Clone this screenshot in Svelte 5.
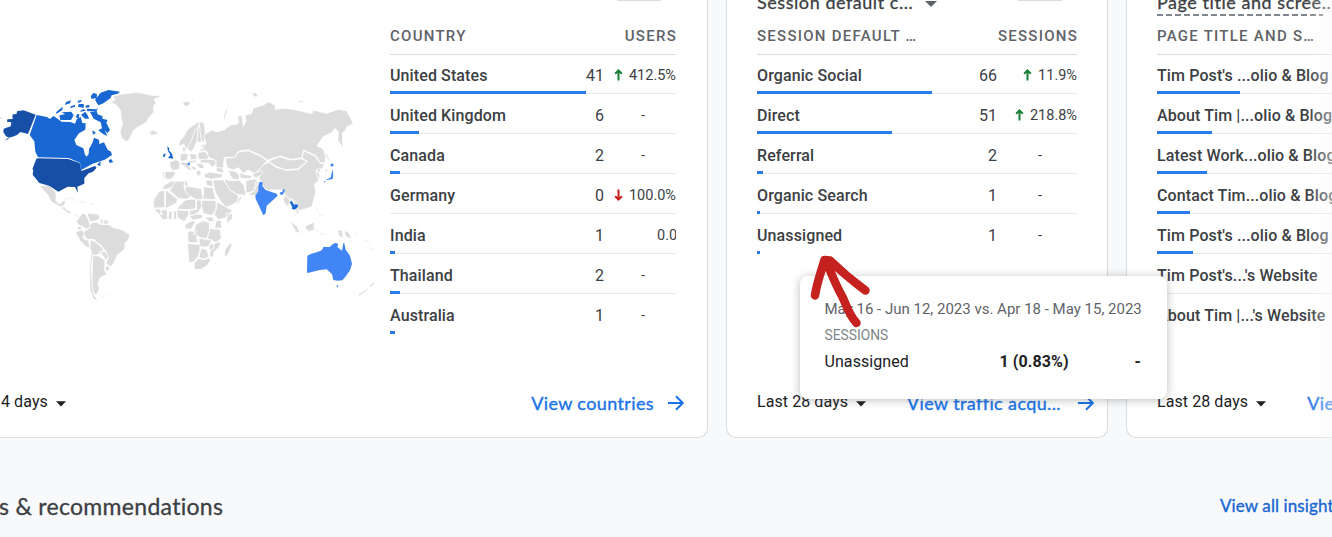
<script>
  const countries = [
    { name: 'United States', value: '41', trend: 'up', change: '412.5%', bar: 195.5 },
    { name: 'United Kingdom', value: '6', change: '-', bar: 29 },
    { name: 'Canada', value: '2', change: '-', bar: 10 },
    { name: 'Germany', value: '0', trend: 'down', change: '100.0%', bar: 0 },
    { name: 'India', value: '1', change: '0.0', cut: true, bar: 5 },
    { name: 'Thailand', value: '2', change: '-', bar: 10 },
    { name: 'Australia', value: '1', change: '-', bar: 5 }
  ];
  const channels = [
    { name: 'Organic Social', value: '66', trend: 'up', change: '11.9%', bar: 175 },
    { name: 'Direct', value: '51', trend: 'up', change: '218.8%', bar: 135 },
    { name: 'Referral', value: '2', change: '-', bar: 5.5 },
    { name: 'Organic Search', value: '1', change: '-', bar: 3 },
    { name: 'Unassigned', value: '1', change: '-', bar: 3 }
  ];
  const pages = [
    { name: "Tim Post's ...olio & Blog", bar: 83 },
    { name: 'About Tim |...olio & Blog', bar: 55 },
    { name: 'Latest Work...olio & Blog', bar: 50 },
    { name: 'Contact Tim...olio & Blog', bar: 33 },
    { name: "Tim Post's ...olio & Blog", bar: 36 },
    { name: "Tim Post's...'s Website", bar: 0 },
    { name: "About Tim |...'s Website", bar: 0 }
  ];
</script>

{#snippet rows(items, kind)}
  {#each items as row, i}
    <div class="row" class:last={i === items.length - 1}>
      <span class="name">{row.name}</span>
      {#if row.value}
        <span class="value">{row.value}</span>
        <span class="change {kind}" class:none={row.change === '-'} class:cut={row.cut}>
          {#if row.trend}
            <svg class="trend {row.trend}" width="9" height="12" viewBox="0 0 9 12"><path d="M4.5 11.6V2.5M1.2 4.7 4.5 1.4 7.8 4.7" /></svg>
          {/if}{row.change}</span>
      {/if}
      <i class="bar" style="width:{row.bar}px"></i>
    </div>
  {/each}
{/snippet}

{#snippet caret()}
  <svg class="caret" width="10" height="6" viewBox="0 0 10 6"><path d="M0 .2h10L5 5.6z" /></svg>
{/snippet}

{#snippet arrow()}
  <svg class="go" width="16" height="16" viewBox="0 0 16 16"><path d="M0 8h14.5M8 1.2 14.8 8 8 14.8" /></svg>
{/snippet}

<main>
  <div class="cards">
    <section class="card geo">
      <div class="title"><span class="pill"></span></div>
      <div class="body">
        <svg class="map" width="390" height="230" viewBox="0 0 1170 690">
          <g class="land">
            <path d="M330 66 345 60 340 48 365 42 410 37 425 39 450 45 485 48 462 58 468 68 460 80 462 95 445 115 440 127 415 140 400 152 388 178 380 186 366 176 360 155 368 130 363 115 362 92 350 76z" />
            <path d="M448 154 460 151 474 156 470 163 455 167z M0 109 10 112 4 118 0 116z" />
            <path d="M118 317 150 317 168 338 168 363 180 372 190 362 198 363 193 374 184 382 154 366 143 344 130 330z M182 382 193 380 200 390 210 392 214 402 202 398z" />
            <path class="fine" d="M194 358 215 354 226 362M235 366 258 367M268 371 279 373M222 405 237 410" />
            <path d="M238 411 247 400 257 402 270 430 271 442 260 447 240 437 228 427z" />
            <path d="M260 399 296 403 300 416 286 423 270 426z M300 418 308 418 311 431 302 431z M312 418 327 423 322 433 312 432z" />
            <path d="M231 440 247 438 243 449 232 449z" />
            <path d="M226 456 247 449 253 460 249 475 266 482 270 505 258 500 240 482z" />
            <path d="M250 456 270 443 270 430 288 426 300 433 327 434 338 442 368 450 390 464 385 480 375 490 374 508 352 525 340 552 331 560 317 550 325 535 318 515 299 492 292 488 282 478 266 479 256 473z" />
            <path d="M270 480 285 484 310 506 307 520 290 525 277 526 270 505z M296 516 312 512 326 530 318 542 309 528z M316 559 326 558 330 568 317 575z" />
            <path d="M278 527 295 527 315 541 314 571 320 583 300 594 294 612 298 625 290 645 280 640 275 610 277 570z" />
            <path d="M272 520 277 527 274 570 277 618 280 641 296 665 280 656 270 630 269 575z" />
            <path class="fine" d="M304 651 310 650M319 649 328 647" />

            <path d="M535 195 540 182 553 166 562 150 580 135 590 129 598 125 606 126 596 138 587 155 581 180 566 208 556 205 552 193 541 197z" />
            <path d="M586 148 597 142 599 164 590 185 582 206 572 215 562 205 575 180z" />
            <path d="M594 136 606 142 612 178 600 188 590 184 593 164z" />
            <path d="M598 125 612 128 616 160 618 180 606 188 601 160z M604 194 616 191 614 202 603 202z M600 205 617 205 616 213 601 213z" />
            <path d="M548 67 568 63 570 72 560 80 550 75z M572 60 585 61 580 65z M755 40 767 38 776 50 763 51z M892 63 912 62 908 67 895 67z M669 119 676 90 700 79 682 91 674 117z" />
            <path d="M541 222 556 219 566 225 560 240 546 245 540 237z M568 220 590 223 591 238 573 240z M594 218 615 214 628 230 618 241 594 237z" />
            <path d="M600 240 618 237 650 240 648 254 637 262 626 250 600 248z M548 202 558 202 557 214 547 215z" />
            <path d="M508 247 528 239 540 246 538 268 520 272 512 264z" />
            <path d="M494 275 518 274 528 279 514 298 495 297z M488 276 493 276 492 296 487 294z" />
            <path d="M542 246 560 247 575 268 568 272 555 259 544 255z M559 278 568 278 564 284z" />
            <path d="M568 242 588 240 588 248 566 249z M588 250 608 250 614 266 598 265z M575 257 588 262 588 273 575 265z M586 275 600 270 604 280 595 290z" />
            <path d="M612 282 630 276 668 282 665 293 632 297 614 293z" />
            <path d="M610 166 635 150 650 155 672 150 690 136 715 131 713 108 725 105 730 140 738 123 735 105 754 101 760 84 790 75 805 65 825 75 826 88 850 85 880 88 911 95 936 101 940 90 980 100 1016 88 1039 92 1054 118 1060 132 1040 140 1035 155 1027 157 1029 205 1013 180 1015 155 1005 145 995 158 970 170 951 197 969 206 977 228 975 250 960 247 948 227 911 210 905 234 870 238 842 228 802 240 780 225 745 210 715 214 705 232 673 232 670 263 648 270 648 242 626 232 620 214 606 206 618 190z" />
            <path d="M675 235 705 232 715 216 745 212 780 228 801 242 780 268 763 280 745 270 730 280 715 263 700 270 682 263z" />
            <path d="M805 244 838 230 870 240 905 236 920 245 893 267 855 269 828 259z" />
            <path d="M774 272 790 255 805 246 827 261 858 271 895 269 922 244 906 235 911 212 946 229 960 249 973 252 966 267 947 273 960 282 954 304 943 312 948 335 936 380 900 392 874 382 860 350 845 330 800 330 782 312z" />
            <path d="M650 262 668 265 671 280 648 274z M685 270 705 273 720 286 715 300 700 298 690 286z M720 278 735 284 760 286 750 296 720 295z M752 285 783 271 790 279 768 294z" />
            <path d="M672 298 695 302 720 302 733 318 738 347 710 342 687 328z M737 302 765 296 775 305 762 333 738 340z M766 307 785 303 783 320 769 347 744 345 763 330z" />
            <path d="M638 300 671 300 690 330 714 346 715 362 700 375 679 383 663 365 645 335z M679 383 718 368 725 352 720 345 714 365z M618 300 637 301 639 321 618 315z" />
            <path d="M977 265 986 274 974 277z M948 277 956 274 960 297 952 293z M947 270 962 265 960 280z" />
            <path d="M973 214 983 226 992 248 982 237z" />

            <path d="M490 318 513 304 530 303 528 316 500 328 488 328z M463 355 478 334 494 331 494 383 462 384 460 372z M497 329 533 358 529 370 496 386z" />
            <path d="M527 304 553 303 552 318 558 335 580 347 559 358 535 355 509 332z" />
            <path d="M553 302 562 304 565 318 556 322z M553 323 565 319 605 326 608 358 589 360 559 340z M611 320 639 323 647 359 609 357z" />
            <path d="M560 359 587 357 588 386 569 389 530 388 548 366z M530 390 565 391 567 402 553 425 532 413z M590 359 603 361 605 380 595 398 569 410 569 391 590 388z" />
            <path d="M606 361 647 361 651 387 635 407 610 400 604 380z M651 365 680 382 697 391 684 411 655 419 643 405z M679 399 698 402 696 417 681 431z" />
            <path d="M462 387 482 387 487 405 475 401z M485 390 502 388 503 416 490 420 479 407z M506 393 517 395 515 419 505 419z M520 393 530 393 530 418 521 418z" />
            <path d="M553 436 568 426 580 422 587 426 573 448 558 447z M568 408 593 402 607 404 608 415 579 421z M648 422 663 420 666 444 644 445z M614 411 638 411 643 424 628 425z" />
            <path d="M588 432 611 422 628 428 628 456 620 476 599 472 579 460z" />
            <path d="M564 453 578 453 590 466 593 488 565 488 563 470z M630 446 660 448 664 475 648 488 622 475z M596 475 618 478 636 480 625 500 600 502z M644 490 661 484 660 498 642 516 639 532 629 530 630 510z" />
            <path d="M562 491 600 493 600 510 594 531 581 546 567 547z M603 505 620 508 627 531 611 537 596 532z M627 495 640 488 641 506 628 511z" />
            <path d="M582 550 596 535 613 539 628 533 632 541 621 557 603 568 584 569z M674 510 690 490 696 493 688 516 678 532 674 525z M584 448 591 455 581 465z" />
            <path d="M852 346 866 353 870 365 864 380 852 368 850 356z M878 358 890 368 897 400 891 404 886 384z M870 354 878 361 882 366 874 366z" />
            <path d="M884 404 890 405 886 410z" />
            <path d="M868 423 891 438 901 461 888 455z M904 465 925 468M917 437 929 432 942 426 943 450 925 454 916 446z M809 407 812 415 806 414z" />
            <path d="M1012 452 1026 449 1030 474 1018 469z M1032 451 1046 457 1055 476 1037 470z M951 368 955 378 952 381z" />
            <path class="fine" d="M950 386 957 391M957 404 968 408M950 448 954 455M960 461 976 465M1063 454 1073 463M1093 479 1108 487M1109 506 1122 510" />
            <path d="M1107 619 1122 605 1125 610 1112 622z M1074 643 1103 624 1102 630 1078 648z" />
          </g>
          <g class="us">
            <path d="M22 118 38 117 37 104 50 101 51 94 70 91 77 93 107 104 84 162 61 156 51 165 28 173 18 169 10 156 11 146 32 139 34 127 21 125z" />
            <path d="M13 182 24 174 27 176M38 170 45 167 42 163" />
            <path d="M116 235 205 237 239 249 244 273 285 258 290 263 279 275 266 280 253 294 253 311 232 320 234 338 225 321 203 320 175 335 149 318 118 309 98 284 100 269 97 268 109 236z" />
          </g>
          <g class="ca">
            <path d="M110 105 141 111 150 117 160 108 173 116 185 125 211 126 225 131 230 118 242 110 247 129 257 130 256 149 237 160 223 180 229 195 250 205 255 224 260 230 266 222 267 207 277 189 282 173 297 179 298 192 312 187 323 209 333 215 336 225 314 239 278 251 242 271 240 248 206 234 114 232 106 215 103 184 89 165z" />
            <path d="M168 97 188 80 187 90 170 101z M178 106 195 103 185 97 214 95 221 106 213 120 181 120z M198 66 213 61 210 70 195 75z M213 79 225 74 225 80 210 85z M236 72 251 72 252 83 234 81z M227 110 233 101 238 103 236 118z M243 105 256 95 263 106 267 116 255 116z" />
            <path d="M241 92 251 87 258 94 258 92 241 95z M292 71 285 59 302 38 325 30 360 35 353 41 335 46 331 55 310 70 296 76z M272 49 280 39 291 42 290 54 275 57z M234 62 245 60 243 66 233 68z" />
            <path d="M270 96 290 93 293 103 308 109 307 116 323 120 319 128 330 150 322 160 314 150 322 168 309 162 295 151 306 145 302 127 281 116z M277 151 288 158 279 164z M291 255 302 243 301 258z M326 241 333 237 340 246 329 249z M260 86 290 88 294 84 290 93 262 94z M256 77 267 74 269 82 258 83z" />
            <path d="M502 199 508 205 507 211 516 221 520 236 504 234 511 225 503 211z M491 223 497 220 495 230 488 230z" />
            <path d="M869 366 875 363 882 374 893 373 894 380 884 389 875 386 877 380z" />
          </g>
          <g class="hi">
            <path d="M562 250 570 247 569 256 563 255z M779 305 788 307 787 318 797 330 830 341 833 347 820 359 800 377 797 400 790 406 774 371 767 357 766 347 775 334 775 321z M839 338 847 335 850 327 855 330 848 345 840 343z" />
            <path d="M993 252 997 250 1002 255 996 260 991 258z M997 266 1000 285 998 297 986 299 976 300 991 293 994 286z M972 304 976 302 974 309z M878 403 877 411" />
            <path d="M922 527 934 521 950 517 965 511 971 500 980 501 989 501 999 492 1004 489 1015 491 1012 501 1026 512 1030 489 1033 490 1037 509 1050 527 1056 551 1050 571 1035 592 1027 601 1013 602 1000 600 996 583 986 573 980 568 960 570 944 574 923 579 921 577z M1009 617 1016 616 1013 623z" />
          </g>
        </svg>
        <div class="table">
          <div class="head"><span>COUNTRY</span><span>USERS</span></div>
          {@render rows(countries, 'narrow')}
        </div>
      </div>
      <footer>
        <span class="range first">4 days {@render caret()}</span>
        <span class="link">View countries</span>{@render arrow()}
      </footer>
    </section>

    <section class="card">
      <div class="title"><span class="t2">Session default c...</span><svg class="drop" width="12" height="6" viewBox="0 0 12 6"><path d="M0 0h12L6 6z" /></svg><span class="pill"></span></div>
      <div class="table">
        <div class="head"><span>SESSION DEFAULT …</span><span>SESSIONS</span></div>
        {@render rows(channels, 'wide')}
      </div>
      <footer>
        <span class="range">Last 28 days {@render caret()}</span>
        <span class="link">View traffic acqu...</span>{@render arrow()}
      </footer>
    </section>

    <section class="card">
      <div class="title"><span class="t3">Page title and scree..</span></div>
      <div class="table">
        <div class="head"><span class="h3">PAGE TITLE AND S…</span></div>
        {@render rows(pages, '')}
      </div>
      <footer>
        <span class="range">Last 28 days {@render caret()}</span>
        <span class="link l3">View</span>
      </footer>
    </section>
  </div>

  <div class="insights">
    <h2>s &amp; recommendations</h2>
    <span class="all">View all insights</span>
  </div>

  <div class="fade"></div>

  <div class="tooltip">
    <div class="dates">May 16 - Jun 12, 2023 vs. Apr 18 - May 15, 2023</div>
    <div class="metric">SESSIONS</div>
    <div class="detail"><span>Unassigned</span><b>1 (0.83%)</b><b>-</b></div>
  </div>
  <svg class="pointer" width="66" height="80" viewBox="0 0 66 80">
    <path d="M5 40.5C6.500 29 11 17 14.500 5L20 5.500Q37 22 55.500 35.500M16 6C22 20 27 33 32 41C36 49 39 60 46.500 68" />
  </svg>
</main>

<style>
  :global(body) { background: #f8f9fb; }
  main { position: relative; width: 1332px; height: 537px; overflow: hidden; font-family: Roboto, sans-serif; color: #3c4043; }
  .cards { display: flex; gap: 18px; width: 1508px; height: 438px; }
  .card { box-sizing: border-box; flex: none; display: flex; flex-direction: column; width: 382px; padding: 0 30px; background: #fff; border: 1px solid #dadce0; border-top: 0; border-radius: 0 0 10px 10px; }
  .geo { width: 708px; padding: 0 31px 0 0; border-left: 0; border-bottom-left-radius: 0; }
  .title { display: flex; height: 17px; font: 400 18px/24px Lato, sans-serif; white-space: nowrap; }
  .title span { margin-top: -10px; height: 26px; }
  .title .pill { width: 50px; height: 10px; margin: -9px 12px 0 auto; border-radius: 5px; background: #dadce0; }
  .title .t2, .title .t3 { -webkit-text-stroke: .3px; letter-spacing: .55px; }
  .title .t2 { width: 157px; }
  .title .t3 { width: 176px; background: repeating-linear-gradient(90deg, #80868b 0 6px, transparent 6px 9px) 0 24px / 166px 2px no-repeat; }
  .drop { margin: 1px 0 0 11px; fill: #5f6368; }
  .body { display: flex; }
  .map { flex: none; margin-top: 63px; }
  .map path { stroke: #fff; stroke-width: 2.5; stroke-linejoin: round; }
  .land { fill: #dcdcdc; }
  .map .fine { fill: none; stroke: #eee; stroke-width: 3; }
  .us { fill: #174ea6; }
  .ca { fill: #1967d2; }
  .hi { fill: #4285f4; }
  .us path, .ca path, .hi path { stroke: none; }
  .table { flex: 1; min-width: 0; }
  .head { display: flex; justify-content: space-between; box-sizing: border-box; height: 38px; padding-top: 9px; border-bottom: 1px solid #dadce0; font-size: 15px; font-weight: 500; line-height: 20px; letter-spacing: 1.26px; color: #5f6368; }
  .head span:last-child:not(.h3) { margin-right: -1px; }
  .row { position: relative; display: flex; box-sizing: border-box; height: 40px; border-bottom: 1px solid #e8eaed; font-size: 16px; line-height: 43px; white-space: nowrap; }
  .head + .row { height: 39px; line-height: 42px; }
  .row.last { border-color: transparent; }
  .name { flex: 1; font-weight: 500; letter-spacing: .11px; }
  .value { text-align: right; }
  .change { box-sizing: border-box; height: 38px; font-size: 14.5px; text-align: right; }
  .narrow { width: 72px; }
  .wide { width: 80px; }
  .narrow.none { padding-right: 31px; }
  .wide.none { padding-right: 35px; }
  .cut { padding-left: 53px; text-align: left; overflow: hidden; }
  .trend { margin-right: 6px; fill: none; stroke-width: 2; vertical-align: -1px; }
  .up { stroke: #188038; }
  .down { stroke: #c5221f; transform: rotate(180deg); }
  .bar { position: absolute; left: 0; bottom: -1px; height: 3px; background: #2b7bf0; }
  footer { display: flex; align-items: center; height: 20px; margin: auto 0 24px; white-space: nowrap; }
  .range { margin-top: -3px; font-size: 16px; letter-spacing: .08px; color: #202124; }
  .first { padding-left: 1px; }
  .caret { margin-left: 4px; fill: #202124; }
  .link { margin-left: auto; font: 400 18px/20px Lato, sans-serif; -webkit-text-stroke: .35px; letter-spacing: .38px; color: #1a73e8; }
  .l3 { margin-left: 41px; }
  .go { flex: none; margin: 0 -8px 0 14px; fill: none; stroke: #1a73e8; stroke-width: 2; }
  .card + .card .go { margin: 0 -17px 0 17px; }
  .insights { display: flex; justify-content: space-between; margin-top: 53px; font-family: Lato, sans-serif; line-height: 30px; }
  h2 { margin: 0 0 0 -1px; font-size: 23px; font-weight: 400; -webkit-text-stroke: .3px; letter-spacing: .3px; }
  .all { width: 112px; white-space: nowrap; font-size: 17px; letter-spacing: .1px; color: #1967d2; -webkit-text-stroke: .35px; }
  .fade { position: absolute; right: 0; top: 0; width: 26px; height: 445px; background: linear-gradient(90deg, rgba(248,249,251,0), rgba(248,249,251,.45)); }
  .tooltip { position: absolute; left: 800px; top: 276px; box-sizing: border-box; width: 367px; height: 123px; padding: 23px 26px 0 24.5px; border-radius: 8px; background: #fff; box-shadow: 0 1px 10px rgba(60,64,67,.35); white-space: nowrap; }
  .dates { font-size: 15px; line-height: 20px; color: #5f6368; }
  .metric { margin-top: 6px; font-size: 13.8px; line-height: 20px; color: #80868b; }
  .detail { display: flex; margin-top: 7px; font-size: 16px; line-height: 20px; letter-spacing: .08px; color: #202124; }
  .detail span { width: 175px; }
  .detail b:last-child { margin-left: auto; }
  .pointer { position: absolute; left: 810px; top: 255px; fill: none; stroke: #c5221f; stroke-width: 8.5; stroke-linecap: round; stroke-linejoin: round; overflow: visible; }
</style>
